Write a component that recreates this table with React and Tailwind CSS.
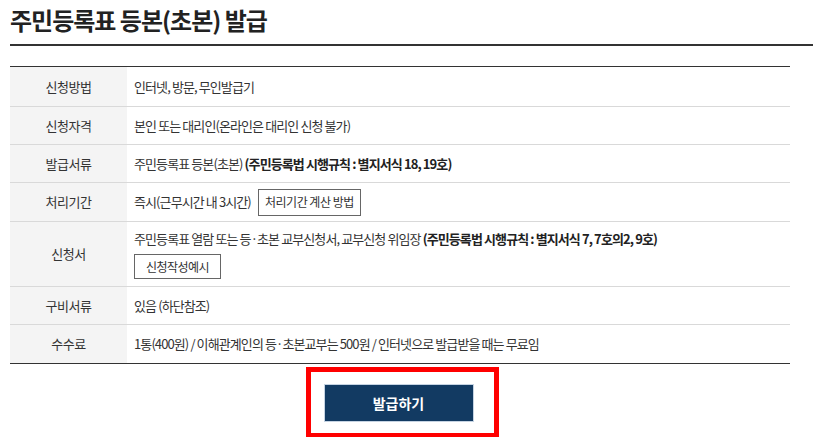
import React from 'react'

const rows = [
  { label: '신청방법', h: 'h-[39px]', body: <span>인터넷, 방문, 무인발급기</span> },
  { label: '신청자격', h: 'h-[38px]', body: <span>본인 또는 대리인(온라인은 대리인 신청 불가)</span> },
  {
    label: '발급서류',
    h: 'h-[38px]',
    body: (
      <span>
        주민등록표 등본(초본) <b className="font-bold text-[#222]">(주민등록법 시행규칙 : 별지서식 18, 19호)</b>
      </span>
    ),
  },
  {
    label: '처리기간',
    h: 'h-[39px]',
    body: (
      <div className="flex items-center gap-[7px]">
        <span>즉시(근무시간 내 3시간)</span>
        <button className="h-[27px] w-[103px] border border-[#666] bg-white text-[12px] tracking-[-0.5px] text-[#333]">
          처리기간 계산 방법
        </button>
      </div>
    ),
  },
  {
    label: '신청서',
    h: 'h-[65px]',
    body: (
      <div className="flex flex-col items-start gap-[6px]">
        <span>
          주민등록표 열람 또는 등·초본 교부신청서, 교부신청 위임장{' '}
          <b className="font-bold text-[#222]">(주민등록법 시행규칙 : 별지서식 7, 7호의2, 9호)</b>
        </span>
        <button className="h-[25px] w-[87px] border border-[#666] bg-white text-[12px] tracking-[-0.5px] text-[#333]">
          신청작성예시
        </button>
      </div>
    ),
  },
  { label: '구비서류', h: 'h-[38px]', body: <span>있음 (하단참조)</span> },
  {
    label: '수수료',
    h: 'h-[39px]',
    body: <span>1통(400원) / 이해관계인의 등·초본교부는 500원 / 인터넷으로 발급받을 때는 무료임</span>,
  },
]

const App = () => {
  return (
    <div
      className="w-[813px] h-[437px] overflow-hidden bg-white pl-[10px] text-[#333]"
      style={{ fontFamily: '"Noto Sans CJK KR", "Noto Sans", sans-serif' }}
    >
      {/* Title */}
      <div className="h-[46px] border-b-2 border-[#333] pt-[3px]">
        <h1 className="text-[24px] font-bold leading-[34px] tracking-[-1px] text-[#222]">
          주민등록표 등본(초본) 발급
        </h1>
      </div>

      {/* Info table */}
      <div className="mt-[20px] w-[780px] border-t border-b border-[#333]">
        {rows.map((row, i) => (
          <div
            key={row.label}
            className={`flex ${row.h} ${i > 0 ? 'border-t border-[#d9d9d9]' : ''}`}
          >
            <div className="flex w-[117px] shrink-0 items-center justify-center bg-[#f4f4f4] text-[13px] tracking-[-0.5px]">
              {row.label}
            </div>
            <div className="flex flex-1 items-center pl-[7px] text-[13px] tracking-[-0.9px]">
              {row.body}
            </div>
          </div>
        ))}
      </div>

      {/* Issue button */}
      <div className="mt-[3px] flex justify-center pr-[19px]">
        <div className="border-[5px] border-[#ff0000] pl-[13px] pr-[20px] pt-[12px] pb-[11px]">
          <button className="h-[38px] w-[150px] border border-[#c5d3e2] bg-[#123a62] text-[14px] font-bold text-white">
            발급하기
          </button>
        </div>
      </div>
    </div>
  )
}

export default App
